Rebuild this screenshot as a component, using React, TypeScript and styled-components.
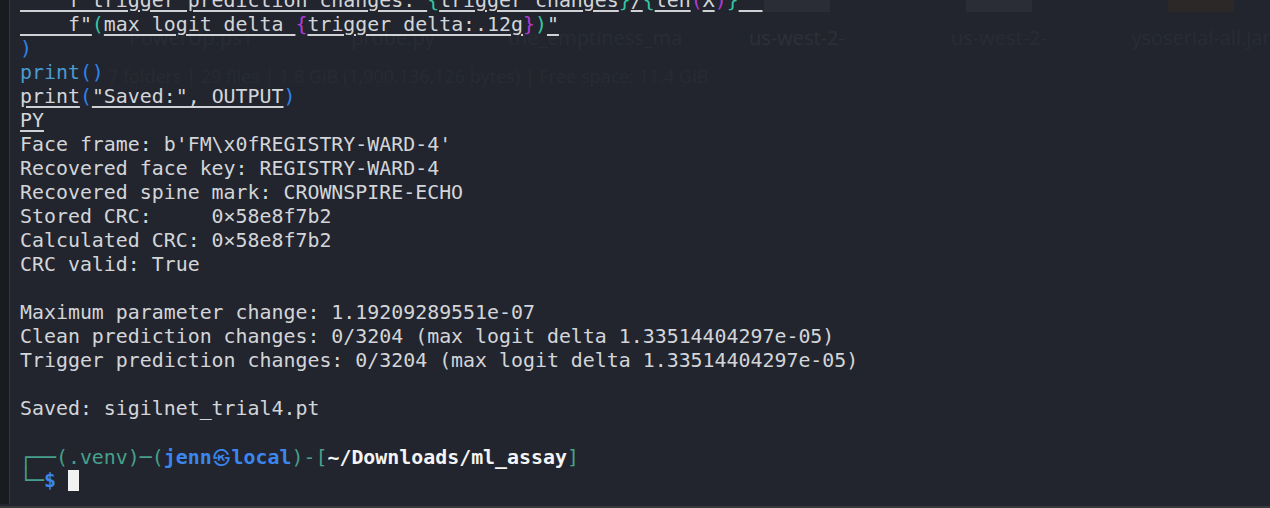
import React from "react";
import styled, { createGlobalStyle } from "styled-components";

const GlobalStyle = createGlobalStyle`
  html, body { margin: 0; padding: 0; background: #22252e; overflow: hidden; }
  #root { width: 1270px; height: 508px; }
`;

const Screen = styled.div`
  position: relative;
  width: 1270px;
  height: 508px;
  overflow: hidden;
  background: #22252e;
  box-sizing: border-box;
  border-bottom: 2px solid #38393c;
`;

/* ---------- desktop seen through the translucent terminal ---------- */
const Desktop = styled.div`
  display: flex;
  flex-direction: column;
  padding-left: 90px;
`;

const IconRow = styled.div`
  display: grid;
  grid-template-columns: repeat(6, 202px);
`;

const DesktopItem = styled.div`
  display: flex;
  flex-direction: column;
  align-items: center;
  gap: 12px;
`;

const IconStub = styled.div<{ $tone?: string }>`
  width: 66px;
  height: 12px;
  background: ${(p) => p.$tone ?? "transparent"};
`;

const Label = styled.div<{ $bright?: boolean }>`
  font-family: "Open Sans", "Noto Sans", sans-serif;
  font-size: 20px;
  line-height: 28px;
  color: ${(p) => (p.$bright ? "#2d3039" : "#292c35")};
  white-space: nowrap;
`;

const StatusLine = styled.div`
  margin: 11px 0 0 18px;
  font-family: "Open Sans", "Noto Sans", sans-serif;
  font-size: 18px;
  line-height: 26px;
  color: #282b33;
  white-space: nowrap;
`;

/* ---------- terminal window ---------- */
const TerminalWindow = styled.div`
  position: absolute;
  inset: 0 0 2px 0;
  display: flex;
`;

const EdgeStrip = styled.div`
  width: 9px;
  flex: none;
  background: #1a1b1f;
  border-right: 1px solid #34363c;
`;

const TermBody = styled.div`
  flex: 1;
  display: flex;
  flex-direction: column;
  justify-content: flex-end;
  overflow: hidden;
  padding: 0 0 11px 10px;
  font-family: "DejaVu Sans Mono", "Noto Sans CJK JP", monospace;
  font-size: 19.9px;
  color: #d3d5d9;
`;

const Line = styled.div`
  height: 24px;
  line-height: 24px;
  white-space: pre;
  flex: none;
`;

const U = styled.span`
  text-decoration: underline;
  text-decoration-thickness: 2px;
  text-underline-offset: 3px;
  text-decoration-color: #cfd1d5;
`;

const C = styled.span<{ $c: string; $bold?: boolean }>`
  color: ${(p) => p.$c};
  font-weight: ${(p) => (p.$bold ? 700 : 400)};
`;

const Seal = styled.span`
  display: inline-block;
  width: 20px;
  text-align: center;
  font-family: "Noto Sans CJK JP", "Noto Sans CJK SC", sans-serif;
  font-weight: 400;
  font-size: 17px;
`;

const Cursor = styled.span`
  display: inline-block;
  width: 11px;
  height: 21px;
  background: #f2f2f2;
  vertical-align: -4px;
`;

const TEAL = "#33c7a2";
const PURPLE = "#b13ad6";
const BLUE = "#2f83ea";
const STEEL = "#4a9bd0";
const PROMPT = "#46a08c";
const HOST = "#3a86ee";

const desktopItems = [
  { name: "PowerUp.ps1" },
  { name: "probe.py" },
  { name: "the_emptiness_ma" },
  { name: "us-west-2-", tone: "#2a2d35", bright: true },
  { name: "us-west-2-", tone: "#2a2d35" },
  { name: "ysoserial-all.jar", tone: "#2c2827" },
];

const output = [
  "Face frame: b'FM\\x0fREGISTRY-WARD-4'",
  "Recovered face key: REGISTRY-WARD-4",
  "Recovered spine mark: CROWNSPIRE-ECHO",
  "Stored CRC:     0×58e8f7b2",
  "Calculated CRC: 0×58e8f7b2",
  "CRC valid: True",
  "",
  "Maximum parameter change: 1.19209289551e-07",
  "Clean prediction changes: 0/3204 (max logit delta 1.33514404297e-05)",
  "Trigger prediction changes: 0/3204 (max logit delta 1.33514404297e-05)",
  "",
  "Saved: sigilnet_trial4.pt",
  "",
];

export default function App() {
  return (
    <Screen>
      <GlobalStyle />
      <Desktop>
        <IconRow>
          {desktopItems.map((d, i) => (
            <DesktopItem key={i}>
              <IconStub $tone={d.tone} />
              <Label $bright={d.bright}>{d.name}</Label>
            </DesktopItem>
          ))}
        </IconRow>
        <StatusLine>
          7 folders | 29 files | 1.8 GiB (1,900,136,126 bytes) | Free space: 11.4 GiB
        </StatusLine>
      </Desktop>

      <TerminalWindow>
        <EdgeStrip />
        <TermBody>
          <Line>
            <U>{'    f"trigger prediction changes: '}</U>
            <C $c={TEAL}>{"{"}</C>
            <U>trigger_changes</U>
            <C $c={TEAL}>{"}"}</C>
            <U>/</U>
            <C $c={TEAL}>{"{"}</C>
            <U>len</U>
            <C $c={PURPLE}>(</C>
            <U>X</U>
            <C $c={PURPLE}>)</C>
            <C $c={TEAL}>{"}"}</C>
            <U>{'" '}</U>
          </Line>
          <Line>
            <U>{'    f"'}</U>
            <C $c={TEAL}>(</C>
            <U>{"max logit delta "}</U>
            <C $c={PURPLE}>{"{"}</C>
            <U>trigger_delta:.12g</U>
            <C $c={PURPLE}>{"}"}</C>
            <C $c={TEAL}>)</C>
            <U>"</U>
          </Line>
          <Line>
            <C $c={BLUE}>)</C>
          </Line>
          <Line>
            <C $c={STEEL}>print</C>
            <C $c={BLUE}>()</C>
          </Line>
          <Line>
            <U>print</U>
            <C $c={BLUE}>(</C>
            <U>"Saved:", OUTPUT</U>
            <C $c={BLUE}>)</C>
          </Line>
          <Line>
            <U>PY</U>
          </Line>
          {output.map((t, i) => (
            <Line key={i}>{t}</Line>
          ))}
          <Line>
            <C $c={PROMPT}>┌──(.venv)─(</C>
            <C $c={HOST} $bold>
              jenn<Seal>㉿</Seal>local
            </C>
            <C $c={PROMPT}>)-[</C>
            <C $c="#f4f4f4" $bold>~/Downloads/ml_assay</C>
            <C $c={PROMPT}>]</C>
          </Line>
          <Line>
            <C $c={PROMPT}>└─</C>
            <C $c={HOST} $bold>$</C> <Cursor />
          </Line>
        </TermBody>
      </TerminalWindow>
    </Screen>
  );
}
